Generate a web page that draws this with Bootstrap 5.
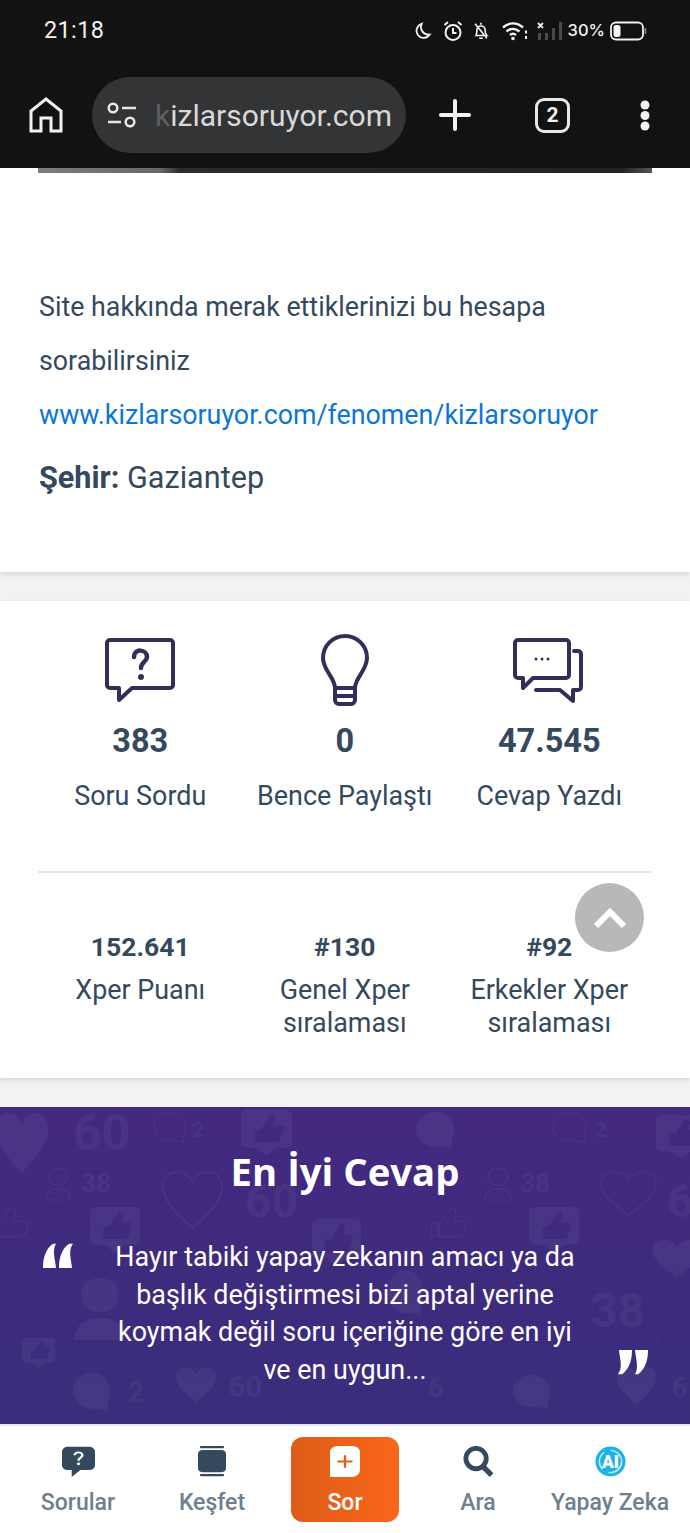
<!DOCTYPE html>
<html lang="en">
<head>
  <meta charset="UTF-8" />
  <title>Kizlarsoruyor profil</title>
  <meta name="viewport" content="width=device-width, initial-scale=1" />
  <link rel="stylesheet" href="https://cdn.jsdelivr.net/npm/bootstrap@5.3.2/dist/css/bootstrap.min.css" />
  <style>
    html, body { height: 1533px; overflow: hidden; }
    body { background: #f2f2f2; font-family: Roboto, sans-serif; color: #34495e; position: relative; }

    .phone-top { background: #121212; height: 168px; padding: 0 43px 0 29px; color: #f2f2f2; }
    .status-row { height: 61px; padding: 0 0 0 15px; }
    .status-time { font-size: 23.400px; letter-spacing: .4px; }
    .status-pct { font-size: 16.500px; font-family: Inter, sans-serif; font-weight: 500; margin-left: 6px; }
    .ico-alarm { margin-left: 11px; }
    .ico-bell { margin-left: 9px; }
    .ico-wifi { margin-left: 12px; }
    .ico-signal { margin-left: 8px; }
    .ico-batt { margin-left: 5px; }
    .browser-row { height: 76px; margin-top: 16px; }
    .browser-row > * { flex: none; }
    .url-pill { width: 314px; height: 76px; margin-left: 29px; border-radius: 38px; background: #333436; padding-left: 15px; overflow: hidden; }
    .url-text { font-size: 30px; color: #d8d8d8; margin-left: 18px; white-space: nowrap; }
    .url-text i { font-style: normal; color: #5f6062; }
    .ico-plus { margin-left: 33px; }
    .tab-count { margin-left: 64px; width: 35px; height: 35px; border: 3.500px solid #e8e8e8; border-radius: 9px; font-size: 21px; font-weight: 700; line-height: 28px; text-align: center; }
    .ico-menu { margin-left: 70px; }

    .about-box { background: #fff; height: 404px; padding: 0 38px; box-shadow: 0 2px 5px rgba(0,0,0,.12); }
    .cover-edge { height: 5px; background: linear-gradient(90deg, #7c7c7c 0, #686868 20%, #2c2c2c 23%, #222 95%, #555 100%); }
    .about-text { margin: 107px 0 0 1px; font-size: 26.800px; line-height: 54px; }
    .about-link { color: #0b76d8; font-size: 26.800px; line-height: 54px; display: block; text-decoration: none; white-space: nowrap; margin-left: 1px; }
    .about-city { font-size: 30.600px; margin: 16px 0 0 1px; line-height: 40px; }

    .stats-box { background: #fff; height: 477px; margin-top: 29px; padding: 0 38px; box-shadow: 0 2px 5px rgba(0,0,0,.12); }
    .stat-main { height: 272px; border-bottom: 2px solid #e4e6e8; padding-top: 33px; }
    .stat-cell { width: 204.500px; flex: none; text-align: center; }
    .stat-ico { height: 72px; }
    .stat-num { font-size: 32.500px; font-weight: 700; line-height: 40px; margin-top: 15px; }
    .stat-lbl { font-size: 26.900px; line-height: 36px; margin-top: 17px; white-space: nowrap; }
    .stat-sub { padding-top: 56px; }
    .sub-num { font-size: 26.500px; font-weight: 700; line-height: 36px; }
    .sub-lbl { font-size: 26.900px; line-height: 33px; margin-top: 9px; }

    .top-btn { position: absolute; left: 575px; top: 883px; width: 69px; height: 69px; border-radius: 50%; background: #b8b8b8; }

    .best-box { background: linear-gradient(180deg, #432980, #3a2d7c); height: 317px; margin-top: 29px; position: relative; overflow: hidden; color: #fff; }
    .best-bg { position: absolute; inset: 0; width: 690px; height: 317px; }
    .best-bg text { font-family: Roboto, sans-serif; font-weight: 700; }
    .best-title { font-family: "Open Sans", sans-serif; font-weight: 700; font-size: 38.300px; line-height: 50px; text-align: center; margin: 0; padding-top: 39px; position: relative; }
    .best-body { position: relative; font-size: 26.900px; line-height: 37.500px; text-align: center; width: 474px; margin: 43px auto 0; }
    .quote-l, .quote-r { position: absolute; }
    .quote-l { left: 43px; top: 136px; }
    .quote-r { left: 618px; top: 243px; }

    .tab-bar { background: #fff; height: 109px; border-top: 2px solid #e6e3f0; }
    .tab-item { flex: none; text-align: center; font-size: 23px; font-weight: 500; color: #6f7f8c; line-height: 30px; margin-top: 20px; white-space: nowrap; }
    .tab-ico { display: block; height: 31px; margin: 0 auto 11px; }
    .tab-sorular { width: 106px; margin-left: 25px; }
    .tab-kesfet { width: 106px; margin-left: 28px; }
    .tab-sor { width: 108px; height: 85px; margin-top: 11px; margin-left: 26px; border-radius: 12px; background: linear-gradient(90deg, #de5c18, #f9661a); color: #fff; padding-top: 9px; }
    .tab-ara { width: 106px; margin-left: 26px; }
    .tab-zeka { width: 128px; margin-left: 15px; }
  </style>
</head>

<body>
  <div class="phone-top">
    <div class="status-row d-flex align-items-center justify-content-between">
      <span class="status-time">21:18</span>
      <div class="d-flex align-items-center">
        <!-- moon -->
        <svg width="17" height="18" viewBox="0 0 18 20" fill="none" stroke="#f2f2f2" stroke-width="2"><path d="M7 2a8 8 0 1 0 9 12A8.500 8.500 0 0 1 7 2z"/></svg>
        <!-- alarm -->
        <svg class="ico-alarm" width="20" height="22" viewBox="0 0 20 22" fill="none" stroke="#f2f2f2" stroke-width="2"><circle cx="10" cy="12.500" r="7.500"/><path d="M10 8v5h3.500M1.500 5 5 2M18.500 5 15 2"/></svg>
        <!-- muted bell -->
        <svg class="ico-bell" width="18" height="20" viewBox="0 0 19 22" fill="none" stroke="#f2f2f2" stroke-width="1.800"><path d="M4 16c1-2 1-4 1-6a4.500 4.500 0 0 1 9 0c0 2 0 4 2 6zM9.500 4V2M7.500 19h4M3 3l13 16"/></svg>
        <!-- wifi -->
        <svg class="ico-wifi" width="27" height="20" viewBox="0 0 27 20" fill="none" stroke="#f2f2f2" stroke-width="2.400"><path d="M1 6.500c6-5.500 14-5.500 20 0M4.500 10.500c4-3.500 9-3.500 13 0M8 14c2-1.800 4-1.800 6 0"/><circle cx="11" cy="17.500" r="1.800" fill="#f2f2f2" stroke="none"/><path d="M24 9.500v3M24 15v3" stroke-width="2"/></svg>
        <!-- signal -->
        <svg class="ico-signal" width="25" height="20" viewBox="0 0 25 20"><path d="M1 2l5 5M6 2l-5 5" stroke="#e8e8e8" stroke-width="1.800"/><rect x="1" y="12" width="3" height="7" fill="#4a4a4a"/><rect x="8" y="12" width="3" height="7" fill="#4a4a4a"/><rect x="15" y="7" width="3" height="12" fill="#4a4a4a"/><rect x="22" y="1" width="3" height="18" fill="#4a4a4a"/></svg>
        <span class="status-pct">30%</span>
        <!-- battery -->
        <svg class="ico-batt" width="37" height="20" viewBox="0 0 37 20"><rect x="1" y="1.500" width="32" height="17" rx="5" fill="none" stroke="#f2f2f2" stroke-width="1.800"/><rect x="3.500" y="4" width="7" height="12" rx="2.500" fill="#f2f2f2"/><rect x="34.500" y="7" width="1.800" height="6" rx="1" fill="#888"/></svg>
      </div>
    </div>
    <div class="browser-row d-flex align-items-center">
      <!-- home -->
      <svg width="34" height="36" viewBox="0 0 34 36" fill="none" stroke="#f2f2f2" stroke-width="3"><path d="M2 34V14L17 2l15 12v20H22V21H12v13z"/></svg>
      <div class="url-pill d-flex align-items-center">
        <!-- tune -->
        <svg width="30" height="26" viewBox="0 0 30 26" fill="none" stroke="#e6e6e6" stroke-width="2.500"><circle cx="6" cy="6" r="4.300"/><path d="M15 6h14M1 20h13"/><circle cx="23" cy="20" r="4.300"/></svg>
        <span class="url-text"><i>k</i>izlarsoruyor.com</span>
      </div>
      <!-- plus -->
      <svg class="ico-plus" width="32" height="32" viewBox="0 0 32 32" stroke="#f2f2f2" stroke-width="4" stroke-linecap="round"><path d="M16 2v28M2 16h28"/></svg>
      <div class="tab-count">2</div>
      <!-- menu -->
      <svg class="ico-menu" width="10" height="31" viewBox="0 0 10 31" fill="#f2f2f2"><circle cx="5" cy="5" r="4.500"/><circle cx="5" cy="15.500" r="4.500"/><circle cx="5" cy="26" r="4.500"/></svg>
    </div>
  </div>

  <section class="about-box">
    <div class="cover-edge"></div>
    <p class="about-text">Site hakkında merak ettiklerinizi bu hesapa sorabilirsiniz</p>
    <a class="about-link" href="#">www.kizlarsoruyor.com/fenomen/kizlarsoruyor</a>
    <div class="about-city"><b>Şehir:</b> Gaziantep</div>
  </section>

  <section class="stats-box">
    <div class="stat-main d-flex">
      <div class="stat-cell">
        <svg class="stat-ico" width="72" height="72" viewBox="0 0 72 72" fill="none" stroke="#352c59" stroke-width="4" stroke-linejoin="round" stroke-linecap="round">
          <path d="M6 6h60a3 3 0 0 1 3 3v42a3 3 0 0 1-3 3H28L15 66V54H6a3 3 0 0 1-3-3V9a3 3 0 0 1 3-3z"/>
          <path d="M30 23c0-9 13-8 13 0 0 5-6 5-6 11" stroke-width="4.500"/>
          <circle cx="37" cy="43" r="3" fill="#352c59" stroke="none"/>
        </svg>
        <div class="stat-num">383</div>
        <div class="stat-lbl">Soru Sordu</div>
      </div>
      <div class="stat-cell">
        <svg class="stat-ico" width="50" height="72" viewBox="0 0 50 72" fill="none" stroke="#352c59" stroke-width="4" stroke-linejoin="round" stroke-linecap="round">
          <path d="M15 54c0-10-12-18-12-30a22 22 0 0 1 44 0c0 12-12 20-12 30z"/>
          <path d="M15 54h20v12a4 4 0 0 1-4 4H19a4 4 0 0 1-4-4zM15 62h20"/>
        </svg>
        <div class="stat-num">0</div>
        <div class="stat-lbl">Bence Paylaştı</div>
      </div>
      <div class="stat-cell">
        <svg class="stat-ico" width="72" height="72" viewBox="0 0 72 72" fill="none" stroke="#352c59" stroke-width="4" stroke-linejoin="round" stroke-linecap="round">
          <path d="M5 6h48a3 3 0 0 1 3 3v32a3 3 0 0 1-3 3H20L10 54V44H5a3 3 0 0 1-3-3V9a3 3 0 0 1 3-3z"/>
          <path d="M61 17h4a3 3 0 0 1 3 3v33a3 3 0 0 1-3 3h-5v11L47 56H23"/>
          <circle cx="23" cy="25" r="1.500" fill="#352c59" stroke="none"/><circle cx="29" cy="25" r="1.500" fill="#352c59" stroke="none"/><circle cx="35" cy="25" r="1.500" fill="#352c59" stroke="none"/>
        </svg>
        <div class="stat-num">47.545</div>
        <div class="stat-lbl">Cevap Yazdı</div>
      </div>
    </div>
    <div class="stat-sub d-flex">
      <div class="stat-cell"><div class="sub-num">152.641</div><div class="sub-lbl">Xper Puanı</div></div>
      <div class="stat-cell"><div class="sub-num">#130</div><div class="sub-lbl">Genel Xper sıralaması</div></div>
      <div class="stat-cell"><div class="sub-num">#92</div><div class="sub-lbl">Erkekler Xper sıralaması</div></div>
    </div>
  </section>

  <div class="top-btn d-flex align-items-center justify-content-center">
    <svg width="34" height="22" viewBox="0 0 34 22" fill="none" stroke="#fff" stroke-width="6"><path d="M3 19 17 5l14 14"/></svg>
  </div>

  <section class="best-box">
    <svg class="best-bg" viewBox="0 0 690 317" id="bestBg"></svg>
    <h2 class="best-title">En İyi Cevap</h2>
    <p class="best-body">Hayır tabiki yapay zekanın amacı ya da başlık değiştirmesi bizi aptal yerine koymak değil soru içeriğine göre en iyi ve en uygun...</p>
    <svg class="quote-l" width="30" height="25" viewBox="0 0 30 30" preserveAspectRatio="none" fill="#fff"><path d="M0 30C0 17 3 7 10 1h3C9 9 12 18 13 30zM16 30C16 17 19 7 26 1h4C25 9 28 18 29 30z"/></svg>
    <svg class="quote-r" width="30" height="25" viewBox="0 0 30 30" preserveAspectRatio="none" fill="#fff"><path d="M30 0C30 13 27 23 20 29h-3C21 21 18 12 17 0zM14 0C14 13 11 23 4 29H0C5 21 2 12 1 0z"/></svg>
  </section>

  <nav class="tab-bar d-flex align-items-start">
    <div class="tab-item tab-sorular">
      <svg class="tab-ico" width="33" height="31" viewBox="0 0 34 40" preserveAspectRatio="none"><path d="M6 1h22a6 6 0 0 1 6 6v18a6 6 0 0 1-6 6H19l-9 9v-9H6a6 6 0 0 1-6-6V7a6 6 0 0 1 6-6z" fill="#34495e"/><path d="M13 12c0-5 8-5 8 0 0 3-4 3-4 7" fill="none" stroke="#fff" stroke-width="2.500"/><circle cx="17" cy="23" r="1.700" fill="#fff"/></svg>
      <div>Sorular</div>
    </div>
    <div class="tab-item tab-kesfet">
      <svg class="tab-ico" width="28" height="31" viewBox="0 0 28 40" preserveAspectRatio="none" fill="#34495e"><rect x="2" y="0" width="24" height="3" rx="1"/><rect x="0" y="5" width="28" height="29" rx="5"/><rect x="2" y="36" width="24" height="3" rx="1"/></svg>
      <div>Keşfet</div>
    </div>
    <div class="tab-item tab-sor">
      <svg class="tab-ico" width="30" height="31" viewBox="0 0 32 40" preserveAspectRatio="none"><path d="M8 0h16a8 8 0 0 1 8 8v23a9 9 0 0 1-9 9H0V8a8 8 0 0 1 8-8z" fill="#fff"/><path d="M16 12v16M8 20h16" stroke="#de5c18" stroke-width="2.500"/></svg>
      <div>Sor</div>
    </div>
    <div class="tab-item tab-ara">
      <svg class="tab-ico" width="32" height="31" viewBox="0 0 32 32" fill="none" stroke="#34495e"><circle cx="14" cy="13" r="10.500" stroke-width="5"/><path d="M21 21l9 9" stroke-width="5.500"/></svg>
      <div>Ara</div>
    </div>
    <div class="tab-item tab-zeka">
      <svg class="tab-ico" width="31" height="31" viewBox="0 0 32 32"><circle cx="16" cy="16" r="15.500" fill="#1fb2e8"/><circle cx="16" cy="16" r="11.500" fill="none" stroke="#bfeeff" stroke-width="1.500" stroke-dasharray="20 7"/><text x="16" y="22.500" text-anchor="middle" font-family="Roboto, sans-serif" font-weight="900" font-size="18" fill="#fff">AI</text></svg>
      <div>Yapay Zeka</div>
    </div>
  </nav>

  <script>
    // faint pattern behind the best answer box, positions read off the screenshot
    const shapes = {
      heart: ["M26 54C16 44 0 30 0 14 0-4 22-4 26 10 30-4 52-4 52 14 52 30 36 44 26 54z", 52, 54],
      bubble: ["M22 0a22 22 0 0 1 22 22c0 8-3 14-3 26-6-4-10-4-19-4a22 22 0 0 1 0-44z", 44, 48],
      like: ["M6 0h40a6 6 0 0 1 6 6v34a6 6 0 0 1-6 6H36L26 56 16 46H6a6 6 0 0 1-6-6V6a6 6 0 0 1 6-6zM14 24h6L28 10c0-6 7-6 7 0l-2 9h8c3 0 3 3 2 5l-3 12c0 2-2 3-4 3H14z", 52, 56],
      thumb: ["M2 24h8v22H2zM12 24 24 8c0-8 8-8 8 0l-2 14h12c4 0 4 4 3 6l-3 14c0 3-3 4-5 4H12z", 46, 48],
      person: ["M12 0c6 0 9 5 9 11s-3 11-9 11-9-5-9-11 3-11 9-11zM0 40c0-10 5-14 12-14s12 4 12 14z", 24, 40]
    };
    // shape, x, y, w, h, solid
    const items = [
      ["heart", -4, 6, 52, 60, 1], ["bubble", 154, 6, 31, 30, 0], ["like", 241, 3, 51, 46, 1],
      ["bubble", 416, 5, 38, 38, 1], ["bubble", 553, 6, 33, 30, 0], ["like", 656, 8, 50, 44, 1],
      ["person", 46, 61, 24, 32, 0], ["heart", 163, 65, 59, 56, 0], ["person", 485, 61, 26, 32, 0],
      ["heart", 601, 65, 55, 43, 0], ["thumb", -16, 100, 45, 31, 0], ["like", 90, 100, 50, 46, 1],
      ["like", 312, 112, 49, 48, 1], ["thumb", 430, 100, 37, 31, 0], ["like", 529, 100, 50, 46, 1],
      ["heart", 652, 133, 50, 37, 1], ["person", 75, 171, 50, 62, 1], ["bubble", 388, 163, 35, 47, 1],
      ["like", 22, 231, 33, 30, 1], ["thumb", 652, 223, 22, 18, 0], ["bubble", 73, 266, 37, 39, 1],
      ["heart", 176, 261, 40, 34, 1], ["bubble", 513, 268, 37, 35, 1], ["heart", 617, 260, 39, 38, 1]
    ];
    // label, x, baseline, size
    const numbers = [
      ["60", 73, 43, 50], ["2", 192, 30, 21], ["38", 81, 85, 26], ["60", 245, 110, 46], ["2", 595, 30, 21],
      ["38", 520, 85, 26], ["60", 667, 110, 46], ["38", 590, 220, 48], ["2", 128, 295, 27], ["60", 228, 290, 30], ["6", 428, 290, 27], ["6", 672, 290, 27]
    ];
    let markup = "";
    items.forEach(([name, x, y, w, h, solid]) => {
      const [d, bw, bh] = shapes[name];
      const paint = solid ? `fill="#fff" fill-rule="evenodd"` : `fill="none" stroke="#fff" stroke-width="1.500"`;
      markup += `<path d="${d}" transform="translate(${x} ${y}) scale(${w / bw} ${h / bh})" opacity=".05" ${paint}/>`;
    });
    numbers.forEach(([t, x, y, size]) => {
      markup += `<text x="${x}" y="${y}" font-size="${size}" fill="#fff" opacity=".045">${t}</text>`;
    });
    document.getElementById("bestBg").innerHTML = markup;
  </script>
</body>
</html>
